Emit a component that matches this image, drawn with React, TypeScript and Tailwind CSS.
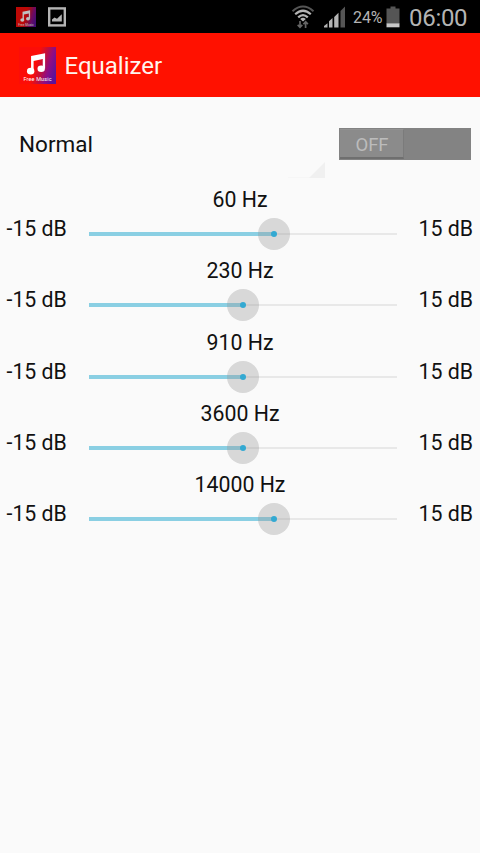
import React, { useState } from "react";

interface Band {
  label: string;
  level: number;
}

const bands: Band[] = [
  { label: "60 Hz", level: 3 },
  { label: "230 Hz", level: 0 },
  { label: "910 Hz", level: 0 },
  { label: "3600 Hz", level: 0 },
  { label: "14000 Hz", level: 3 },
];

function AppIcon({ className, id }: { className: string; id: string }) {
  return (
    <svg viewBox="0 0 38 38" className={className}>
      <defs>
        <linearGradient id={id} x1="0" y1="0.35" x2="1" y2="0.65">
          <stop offset="0.45" stopColor="#fc0d08" />
          <stop offset="0.62" stopColor="#c4103a" />
          <stop offset="0.8" stopColor="#8d0d86" />
          <stop offset="1" stopColor="#5a129c" />
        </linearGradient>
      </defs>
      <rect width="38" height="38" fill={`url(#${id})`} />
      <g fill="#fff">
        <ellipse cx="12" cy="24.8" rx="3.8" ry="3.4" />
        <ellipse cx="22.8" cy="22.3" rx="3.8" ry="3.4" />
        <path d="M12.4 9.2 26.8 6.4V22H24.4V12.4L15 14.3V25H12.4Z" />
      </g>
      <text
        x="19"
        y="35.4"
        textAnchor="middle"
        textLength="29"
        fontSize="5.6"
        fill="#fff"
      >
        Free Music
      </text>
    </svg>
  );
}

function StatusBar() {
  return (
    <div className="flex h-[33px] items-center bg-black text-[#b4b4b4]">
      <AppIcon id="status-icon" className="ml-4 size-5 opacity-75" />
      <svg viewBox="0 0 18 20" className="ml-3 h-5 w-[18px]">
        <rect x="1.2" y="1.4" width="15.6" height="17" fill="none" stroke="#b4b4b4" strokeWidth="2.4" />
        <path d="M4 14.5V12.5L6.5 10.5 9 11.8 13.8 7.3V14.5Z" fill="#b4b4b4" />
      </svg>

      <svg viewBox="0 0 24 24" className="ml-[225px] h-6 w-6" fill="none">
        <path d="M1.5 6.2Q12 -3.2 22.5 6.2" stroke="#555" strokeWidth="2" />
        <path d="M4.2 9.3Q12 2.2 19.8 9.3" stroke="#b4b4b4" strokeWidth="2.2" />
        <path d="M7.2 12.4Q12 7.8 16.8 12.4" stroke="#b4b4b4" strokeWidth="2.2" />
        <path d="M9.2 14Q12 11.4 14.8 14L12 16.4Z" fill="#b4b4b4" />
        <path
          d="M9 16V22.2M6.7 19.8 9 22.3 11.3 19.8M14.6 23V16.9M12.4 19.2 14.6 16.8 16.9 19.2"
          stroke="#666"
          strokeWidth="1.7"
        />
      </svg>
      <svg viewBox="0 0 22 22" className="ml-[9px] h-[22px] w-[22px]">
        <path d="M0 21.5V20L3.5 17.3V21.5ZM5 21.5V15.2L8.5 12V21.5ZM10.2 21.5V11L14.5 6.8V21.5Z" fill="#b4b4b4" />
        <path d="M16.5 21.5V5L21 0.5V21.5Z" fill="#555" />
      </svg>
      <span className="ml-[7px] w-[30px] whitespace-nowrap pt-[3px] text-[16px] leading-5 tracking-[-0.1px]">
        24%
      </span>
      <svg viewBox="0 0 14 22" className="ml-[3px] h-[22px] w-[14px]">
        <path d="M4.5 0.5H9.5V2.5H13.5V17.5H0.5V2.5H4.5Z" fill="#555" />
        <rect x="0.5" y="17.3" width="13" height="4" fill="#c8c8c8" />
      </svg>
      <span className="ml-[9px] pt-0.5 text-[24px] leading-7 tracking-[-0.3px]">06:00</span>
    </div>
  );
}

function BandSlider({ label, level }: Band) {
  const percent = ((level + 15) / 30) * 100;

  return (
    <div className="h-[71.25px]">
      <p className="text-center">{label}</p>
      <div className="flex items-start pl-[6.5px] pr-[7px]">
        <span className="w-[82.5px] leading-[31px]">-15 dB</span>
        <div className="relative flex h-[42px] w-[308px] items-center">
          <div className="h-[2px] w-full bg-[#e8e8e8]" />
          <div
            className="absolute left-0 top-[19px] h-[4px] bg-[#8acfe3]"
            style={{ width: `${percent}%` }}
          />
          <div
            className="absolute top-[5px] flex size-8 -translate-x-1/2 items-center justify-center rounded-full bg-[#999]/35"
            style={{ left: `${percent}%` }}
          >
            <div className="size-[6px] rounded-full bg-[#33a9d2]" />
          </div>
        </div>
        <span className="flex-1 text-right leading-[31px]">15 dB</span>
      </div>
    </div>
  );
}

function App() {
  const [enabled, setEnabled] = useState(false);

  return (
    <div className="h-[853px] w-[480px] overflow-hidden bg-[#fafafa] font-[Roboto,sans-serif] text-[21.3px] leading-[26px] text-[#111]">
      <StatusBar />

      <header className="flex h-16 items-center bg-[#ff1100] pl-[19px]">
        <AppIcon id="header-icon" className="size-[37px]" />
        <h1 className="ml-[8.5px] pt-0.5 text-[24px] leading-7 text-[#fff4ee]">Equalizer</h1>
      </header>

      <div className="flex h-[90px] justify-between pl-[19px] pr-[9px]">
        <div className="relative w-[306px] pt-[32px] text-[22.5px] leading-[30px]">
          Normal
          <div className="absolute right-0 top-[80px] h-px w-[37px] bg-[#f6f6f6]" />
          <svg viewBox="0 0 16 16" className="absolute right-0 top-[65px] size-4">
            <path d="M16 0V16H0Z" fill="#f0f0f0" />
          </svg>
        </div>
        <button
          onClick={() => setEnabled(!enabled)}
          className={`mt-[31px] flex h-8 w-[132px] bg-[#838383] p-px ${
            enabled ? "justify-end" : "justify-start"
          }`}
        >
          <span className="h-[30px] w-[64px] border-b-2 border-r border-t border-b-[#6f6f6f] border-r-[#7b7b7b] border-t-[#929292] bg-[#8b8b8b] pl-px text-center text-[18.5px] leading-[30px] text-[#bcbcbc]">
            {enabled ? "ON" : "OFF"}
          </span>
        </button>
      </div>

      <main>
        {bands.map((band) => (
          <BandSlider key={band.label} {...band} />
        ))}
      </main>
    </div>
  );
}

export default App;
